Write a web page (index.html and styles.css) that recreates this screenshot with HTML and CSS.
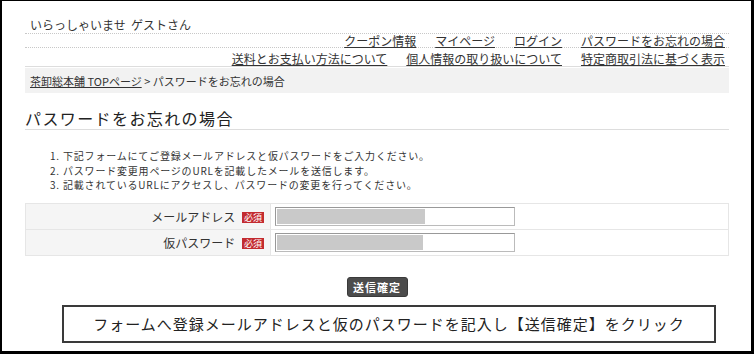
FILE: index.html
```html
<!DOCTYPE html>
<html lang="ja">

<head>
    <meta charset="UTF-8">
    <meta name="viewport" content="width=device-width, initial-scale=1.0">
    <title>パスワードをお忘れの場合</title>
    <link rel="stylesheet" href="styles.css">
</head>

<body>
    <div class="frame">
        <div class="content">
            <div class="header">
                <p class="welcome">いらっしゃいませ&nbsp;&nbsp;ゲストさん</p>
                <ul class="nav nav-top">
                    <li><a href="#">クーポン情報</a></li>
                    <li><a href="#">マイページ</a></li>
                    <li><a href="#">ログイン</a></li>
                    <li><a href="#">パスワードをお忘れの場合</a></li>
                </ul>
                <ul class="nav nav-sub">
                    <li><a href="#">送料とお支払い方法について</a></li>
                    <li><a href="#">個人情報の取り扱いについて</a></li>
                    <li><a href="#">特定商取引法に基づく表示</a></li>
                </ul>
            </div>

            <div class="breadcrumb"><a href="#">茶卸総本舗 TOPページ</a> &gt; パスワードをお忘れの場合</div>

            <h1 class="page-title">パスワードをお忘れの場合</h1>

            <ol class="steps">
                <li>下記フォームにてご登録メールアドレスと仮パスワードをご入力ください。</li>
                <li>パスワード変更用ページのURLを記載したメールを送信します。</li>
                <li>記載されているURLにアクセスし、パスワードの変更を行ってください。</li>
            </ol>

            <table class="form-table">
                <tr>
                    <th>メールアドレス <span class="req">必須</span></th>
                    <td><div class="field"><span class="filled filled-mail"></span></div></td>
                </tr>
                <tr>
                    <th>仮パスワード <span class="req">必須</span></th>
                    <td><div class="field"><span class="filled filled-pass"></span></div></td>
                </tr>
            </table>

            <div class="submit"><button type="button">送信確定</button></div>

            <div class="note">フォームへ登録メールアドレスと仮のパスワードを記入し【送信確定】をクリック</div>
        </div>
    </div>
</body>

</html>
```

FILE: styles.css
```css
html,
body {
    margin: 0;
    padding: 0;
}

body {
    background-color: #000;
    font-family: "Noto Sans CJK JP", "Liberation Sans", sans-serif;
    color: #333;
}

.frame {
    width: 749px;
    height: 350px;
    margin: 1px 0 0 2px;
    background-color: #fff;
    overflow: hidden;
}

.content {
    width: 704px;
    margin-left: 23px;
}

/* header */
.welcome {
    margin: 0;
    padding: 16px 0 0 5px;
    height: 16px;
    font-size: 12px;
    line-height: 16px;
    border-bottom: 1px dotted #c8c8c8;
}

.nav {
    display: flex;
    justify-content: flex-end;
    gap: 19px;
    margin: 0;
    padding: 0 4px 0 0;
    list-style: none;
    font-size: 12px;
}

.nav a {
    color: #333;
    text-decoration: underline;
}

.nav-top {
    height: 13px;
    line-height: 13px;
    border-bottom: 1px dotted #c8c8c8;
}

.nav-sub {
    height: 14px;
    padding-top: 4px;
    line-height: 14px;
    border-bottom: 1px solid #ddd;
}

.breadcrumb {
    height: 25px;
    margin-top: 1px;
    padding-left: 5px;
    background-color: #f2f2f2;
    font-size: 11px;
    line-height: 27px;
}

.breadcrumb a {
    color: #333;
}

/* title */
.page-title {
    margin: 15px 0 0 0;
    height: 21px;
    font-size: 16px;
    font-weight: normal;
    line-height: 21px;
    letter-spacing: 1.4px;
    color: #222;
    border-bottom: 1px solid #ddd;
}

.steps {
    margin: 19px 0 0 0;
    padding-left: 25px;
    list-style-position: inside;
    font-size: 10px;
    line-height: 14.5px;
    letter-spacing: 0.8px;
}

/* form */
.form-table {
    width: 704px;
    margin-top: 10px;
    border-collapse: collapse;
    font-size: 12px;
}

.form-table th,
.form-table td {
    height: 25px;
    padding: 0;
    border: 1px solid #e6e6e6;
}

.form-table th {
    width: 238px;
    padding-right: 6px;
    background-color: #f5f5f5;
    font-weight: normal;
    text-align: right;
}

.form-table td {
    padding-left: 4px;
}

.req {
    display: inline-block;
    margin-left: 4px;
    padding: 0 2px;
    background-color: #c32b30;
    color: #fff;
    font-size: 9px;
    line-height: 11px;
    vertical-align: 1px;
}

.field {
    width: 236px;
    height: 15px;
    padding: 1px;
    border: 1px solid #bbb;
    border-top-color: #999;
    border-left-color: #999;
    background-color: #fff;
}

.filled {
    display: block;
    height: 15px;
    background-color: #c9c9c9;
}

.filled-mail {
    width: 148px;
}

.filled-pass {
    width: 146px;
}

/* submit */
.submit {
    margin-top: 21px;
    line-height: 0;
    text-align: center;
}

.submit button {
    width: 61px;
    height: 20px;
    padding: 0;
    border: 1px solid #3a3a3a;
    border-radius: 3px;
    background-color: #4c4c4c;
    color: #fff;
    font-family: inherit;
    font-size: 11px;
    font-weight: bold;
    letter-spacing: 1px;
    line-height: 18px;
}

.note {
    width: 650px;
    height: 34px;
    margin: 8px 0 0 37px;
    border: 2px solid #3a3a3a;
    font-size: 15px;
    line-height: 34px;
    letter-spacing: 1px;
    text-align: center;
    color: #222;
}
```
